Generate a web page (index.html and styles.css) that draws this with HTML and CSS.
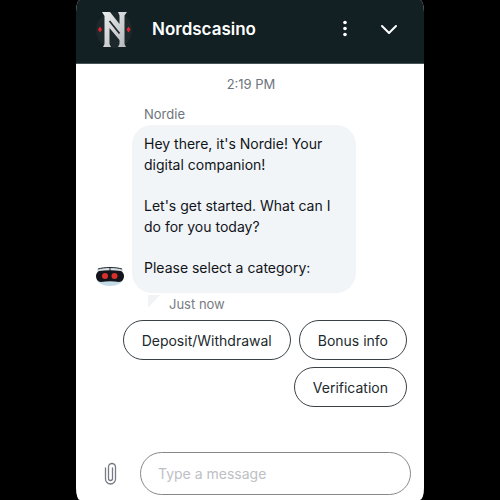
FILE: index.html
```html
<!DOCTYPE html>
<html lang="en">
<head>
<meta charset="utf-8">
<meta name="viewport" content="width=device-width, initial-scale=1">
<title>Nordscasino</title>
<link rel="stylesheet" href="styles.css">
</head>
<body>
<main class="chat">
  <header class="header">
    <svg class="logo" viewBox="0 0 50 50" aria-hidden="true">
      <defs>
        <linearGradient id="steel" x1="0" y1="0" x2="1" y2="1">
          <stop offset="0" stop-color="#eceeef"/>
          <stop offset="1" stop-color="#b4b7ba"/>
        </linearGradient>
      </defs>
      <circle cx="24" cy="26" r="18" fill="#1c282c"/>
      <path d="M10 22.500 12 25.500 10 28.500 8 25.500zM38.500 22.500 40.500 25.500 38.500 28.500 36.500 25.500z" fill="#df2431"/>
      <path fill="url(#steel)" d="M12 8h8l9.500 12v-8.500L28 8h9l-2.500 3.500V40l1.500 3h-8l1.500-3v-4L19.500 24v16l1.500 3h-8l1.500-3V12z"/>
      <path fill="none" stroke="#1b2529" stroke-width="1.700" d="M19.500 17l10 12.500"/>
    </svg>
    <h1 class="title">Nordscasino</h1>
    <button class="icon-button" type="button" aria-label="Menu">
      <svg width="24" height="24" viewBox="0 0 24 24" fill="#fff" aria-hidden="true"><circle cx="12" cy="5.500" r="1.800"/><circle cx="12" cy="11.500" r="1.800"/><circle cx="12" cy="17.500" r="1.800"/></svg>
    </button>
    <button class="icon-button" type="button" aria-label="Minimize">
      <svg width="24" height="24" viewBox="0 0 24 24" fill="none" stroke="#fff" stroke-width="2" stroke-linecap="round" stroke-linejoin="round" aria-hidden="true"><path d="M5 9l7 7 7-7"/></svg>
    </button>
  </header>

  <section class="messages">
    <time class="time">2:19 PM</time>
    <div class="sender">Nordie</div>
    <div class="row">
      <svg class="avatar" width="30" height="22" viewBox="0 0 30 22" aria-hidden="true">
        <path d="M1 10c0 7 5 11 14 11s14-4 14-11z" fill="#c4dbe8"/>
        <path d="M2 4c7-3 19-3 26 0l-1 5H3z" fill="#d5dfe5"/>
        <path d="M3 4c7-2 17-2 24 0M15 3v4" fill="none" stroke="#25282d" stroke-width="1"/>
        <path d="M4 6c7-1 15-1 22 0 2 1 3 3 3 5 0 3-2 6-5 6-6-1-12-1-18 0-3 0-5-3-5-6 0-2 1-4 3-5z" fill="#14151a"/>
        <circle cx="10" cy="11" r="3" fill="#d9302c"/><circle cx="19.500" cy="11" r="3" fill="#d9302c"/>
      </svg>
      <div class="bubble">
        <p>Hey there, it's Nordie! Your digital companion!</p>
        <p>Let's get started. What can I do for you today?</p>
        <p>Please select a category:</p>
      </div>
    </div>
    <div class="status">
      <svg width="12" height="14" viewBox="0 0 12 14" aria-hidden="true"><path d="M0 0h12L0 13z" fill="#f2f3f4"/></svg>
      <span>Just now</span>
    </div>
    <div class="replies">
      <button class="reply" type="button">Deposit/Withdrawal</button>
      <button class="reply" type="button">Bonus info</button>
      <button class="reply" type="button">Verification</button>
    </div>
  </section>

  <form class="composer">
    <button class="attach" type="button" aria-label="Attach a file">
      <svg width="14" height="24" viewBox="0 0 14 24" fill="none" stroke="#777b84" stroke-width="1.300" stroke-linecap="round" aria-hidden="true"><path d="M1.500 6v11a5 5 0 0 0 10 0V5a3.500 3.500 0 0 0-7 0v11.500a2 2 0 0 0 4 0V6"/></svg>
    </button>
    <input class="field" type="text" placeholder="Type a message" aria-label="Type a message">
  </form>
</main>
</body>
</html>
```
FILE: styles.css
```css
* {
  box-sizing: border-box;
}

body {
  margin: 0;
  background: #000;
  color: #101418;
  font-family: Inter, "Liberation Sans", sans-serif;
  font-size: 14px;
}

h1,
p {
  margin: 0;
}

button {
  padding: 0;
  border: 0;
  background: none;
  color: inherit;
  font: inherit;
}

svg {
  display: block;
}

.chat {
  display: flex;
  flex-direction: column;
  min-height: 100vh;
  margin: 0 76px;
  overflow: hidden;
  border-radius: 4px / 12px;
  background: #fff;
}

.header {
  display: flex;
  align-items: center;
  gap: 20px;
  height: 64px;
  padding: 0 23px 5px 14px;
  border-bottom: 1px solid #46545a;
  background: #122024;
  color: #fff;
}

.logo {
  width: 50px;
  height: 50px;
}

.title {
  flex: 1;
  margin-left: -8px;
  font-size: 17px;
  font-weight: 600;
}

.messages {
  flex: 1;
  display: flex;
  flex-direction: column;
  padding: 11px 17px 0 19px;
}

.time {
  align-self: center;
  color: #6d747c;
  font-size: 13px;
  line-height: 18px;
}

.sender {
  margin: 13px 0 2px 49px;
  color: #6d747c;
  font-size: 13px;
  line-height: 17px;
}

.row {
  display: flex;
  align-items: flex-end;
  gap: 7px;
}

.avatar {
  margin-bottom: 6px;
}

.bubble {
  display: flex;
  flex-direction: column;
  gap: 20px;
  max-width: 224px;
  padding: 8px 12px 15px;
  border-radius: 20px;
  background: #f2f5f8;
  line-height: 21px;
}

.status {
  display: flex;
  gap: 9px;
  margin: 2px 0 7px 53px;
  color: #777c82;
  font-size: 13px;
  line-height: 18px;
}

.replies {
  display: flex;
  flex-wrap: wrap;
  justify-content: flex-end;
  gap: 7px 8px;
}

.reply {
  height: 40px;
  padding: 0 18px;
  border: 1px solid #3a4145;
  border-radius: 20px;
  color: #1c292d;
}

.composer {
  display: flex;
  align-items: center;
  gap: 22px;
  padding: 0 13px 5px 28px;
}

.field {
  flex: 1;
  min-width: 0;
  height: 43px;
  padding: 0 17px;
  border: 1px solid #85888b;
  border-radius: 22px;
  background: #fff;
  color: inherit;
  font: inherit;
}

.field::placeholder {
  color: #bdc0c4;
  opacity: 1;
}
```
